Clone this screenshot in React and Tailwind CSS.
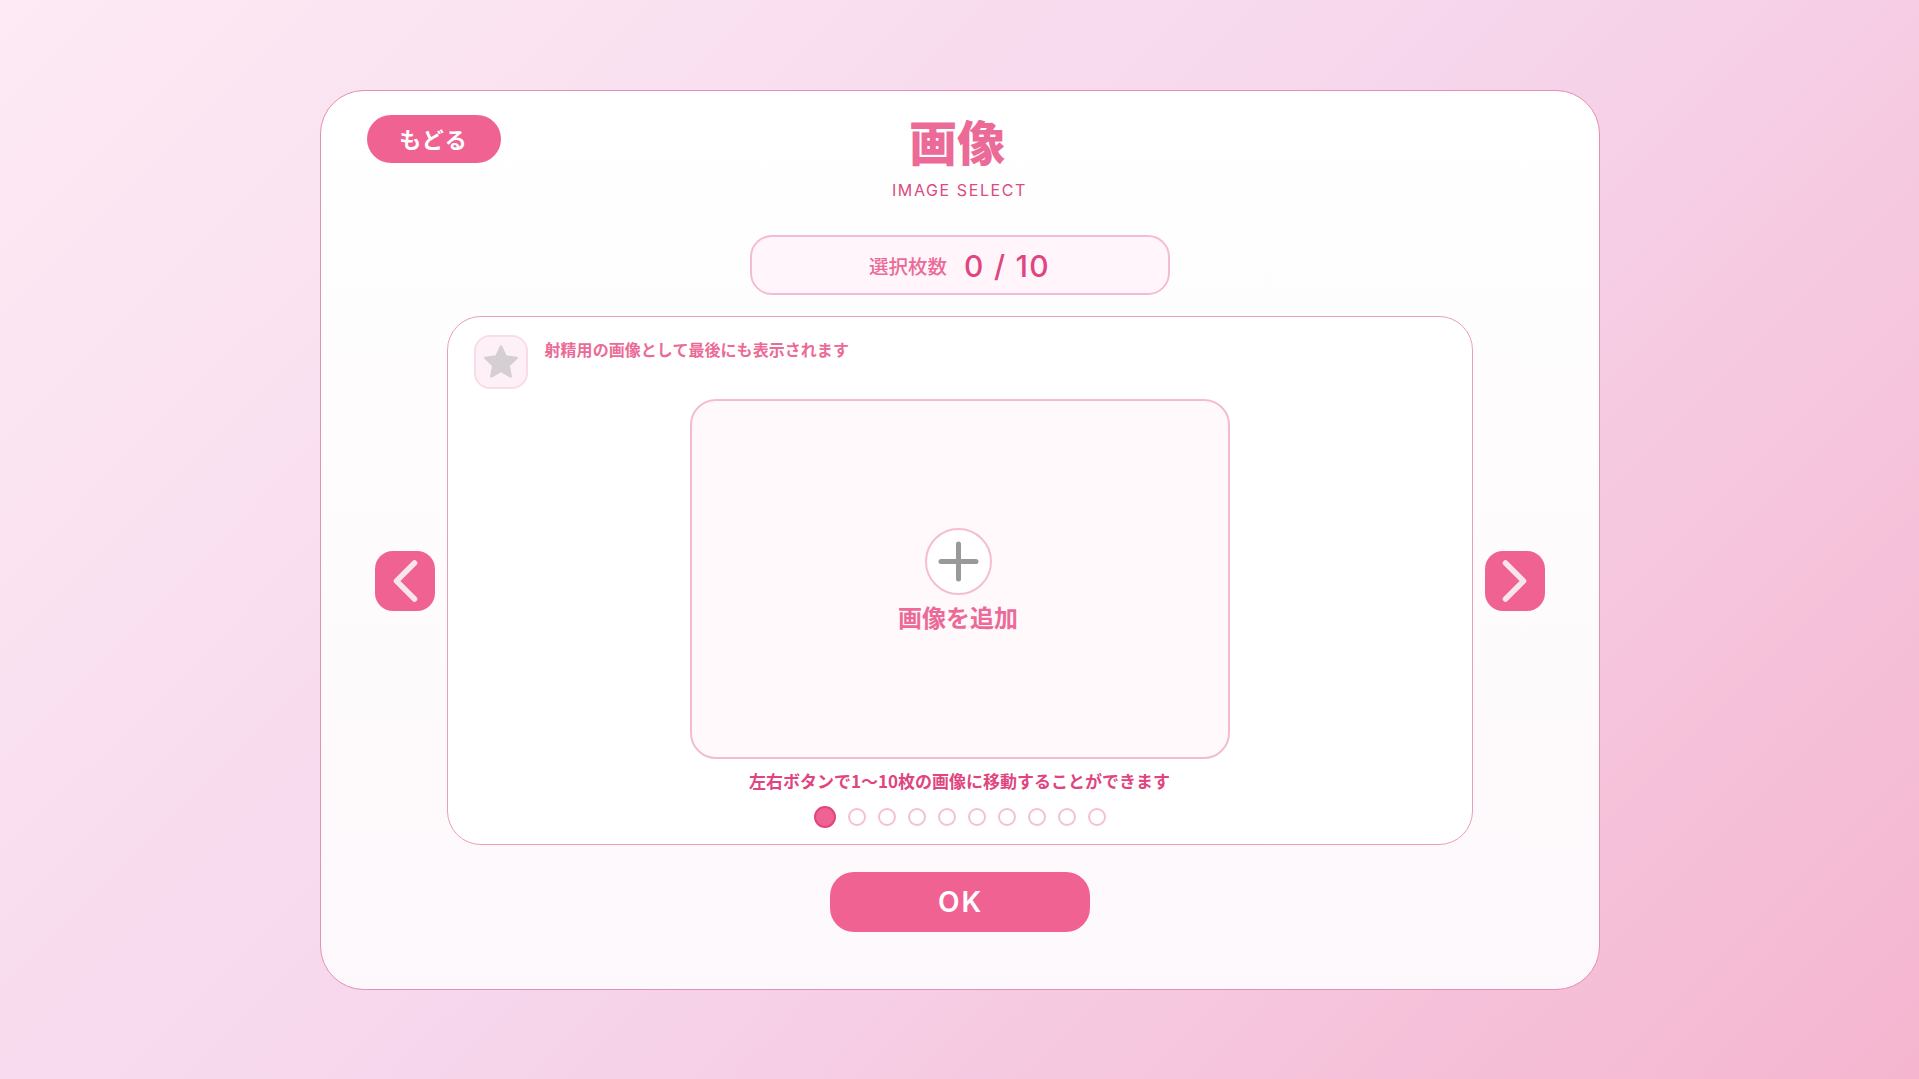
import React from "react";

const jp = "font-['Noto_Sans_CJK_JP','Noto_Sans',sans-serif]";
const latin = "font-['Inter','Noto_Sans_CJK_JP',sans-serif]";

function Arrow({ dir }) {
  return (
    <button className="mt-[2px] flex h-[60px] w-[60px] shrink-0 items-center justify-center rounded-[18px] bg-[#f06292]">
      <svg width="60" height="60" viewBox="0 0 60 60" fill="none" stroke="#f9e6ed" strokeWidth="5.5" strokeLinecap="round" strokeLinejoin="round">
        {dir === "left" ? <path d="M39.5 12 L21.5 30 L39.5 48" /> : <path d="M20.5 12 L38.5 30 L20.5 48" />}
      </svg>
    </button>
  );
}

export default function App() {
  const dots = [1, 2, 3, 4, 5, 6, 7, 8, 9];
  return (
    <div className={`flex h-screen w-full items-center justify-center bg-[linear-gradient(135deg,#fdeaf4_0%,#f6d6ec_50%,#f5b5cf_100%)] ${jp}`}>
      <div className="flex h-[900px] w-[1280px] flex-col items-center rounded-[44px] border border-[#e48fb4] bg-[linear-gradient(180deg,#ffffff_0%,#fdf8fb_100%)] px-[46px] pt-[24px]">
        <div className="grid h-[95px] w-full grid-cols-[1fr_auto_1fr] items-start">
          <button className="h-[48px] w-[134px] justify-self-start rounded-full bg-[#f06292] text-[22px] font-bold tracking-[1px] text-white">
            もどる
          </button>
          <div className="flex flex-col items-center">
            <h1 className="mt-[-3px] mr-[5px] text-[48px] leading-[56px] font-black text-[#ec6a98]">画像</h1>
            <p className={`mt-[12px] text-[16px] leading-[20px] tracking-[1.6px] text-[#dc4a80] ${latin}`}>IMAGE SELECT</p>
          </div>
          <div />
        </div>

        <div className="mt-[25px] flex h-[60px] w-[420px] items-center justify-center gap-[17px] rounded-[22px] border-2 border-[#f4bcd4] bg-[#fff5fb] pt-[3px]">
          <span className="text-[19.5px] font-medium text-[#ec6a98]">選択枚数</span>
          <span className={`text-[30px] font-medium tracking-[1.3px] text-[#e0457f] ${latin}`}>0 / 10</span>
        </div>

        <div className="mt-[21px] flex items-center justify-center gap-[12px]">
          <Arrow dir="left" />
          <div className="flex h-[529px] w-[1026px] flex-col items-center rounded-[34px] border border-[#e99ebe] bg-white">
            <div className="flex w-full items-start gap-[17px] pt-[18px] pl-[26px]">
              <div className="flex h-[54px] w-[54px] items-center justify-center rounded-[16px] border-2 border-[#fadbe9] bg-[#fdf1f7]">
                <svg width="40" height="40" viewBox="0 0 40 40" fill="#d5ced2" stroke="#d5ced2" strokeWidth="2.5" strokeLinejoin="round">
                  <polygon points="20,4.5 24.7,14.5 35.7,15.9 27.6,23.5 29.7,34.4 20,29 10.3,34.4 12.4,23.5 4.3,15.9 15.3,14.5" />
                </svg>
              </div>
              <p className="mt-[3px] text-[16px] leading-[22px] font-bold tracking-[0.05px] text-[#ec6a98]">射精用の画像として最後にも表示されます</p>
            </div>
            <div className="mt-[10px] flex h-[360px] w-[540px] flex-col items-center rounded-[26px] border-2 border-[#f4bcd4] bg-[#fff9fc] pt-[127px]">
              <div className="ml-[-3px] flex h-[67px] w-[67px] items-center justify-center rounded-full border-2 border-[#f5bdd3] bg-white">
                <svg width="41" height="41" viewBox="0 0 41 41" fill="none" stroke="#999999" strokeWidth="5" strokeLinecap="round">
                  <path d="M20.5 3 V38 M3 20.5 H38" />
                </svg>
              </div>
              <p className="mt-[6px] ml-[-3px] text-[24px] leading-[32px] font-bold text-[#ec6a98]">画像を追加</p>
            </div>
            <p className="mt-[10px] text-[17px] leading-[24px] font-bold text-[#e0457f]">左右ボタンで1〜10枚の画像に移動することができます</p>
            <div className="mt-[13px] flex items-center gap-[12px]">
              <span className="h-[22px] w-[22px] rounded-full border-2 border-[#e0457f] bg-[#f06292]" />
              {dots.map((d) => (
                <span key={d} className="h-[18px] w-[18px] rounded-full border-2 border-[#f5c0d6] bg-white" />
              ))}
            </div>
          </div>
          <Arrow dir="right" />
        </div>

        <button className={`mt-[27px] h-[60px] w-[260px] rounded-[24px] bg-[#f06292] pl-[2px] text-[28px] font-semibold tracking-[2px] text-white ${latin}`}>
          OK
        </button>
      </div>
    </div>
  );
}
